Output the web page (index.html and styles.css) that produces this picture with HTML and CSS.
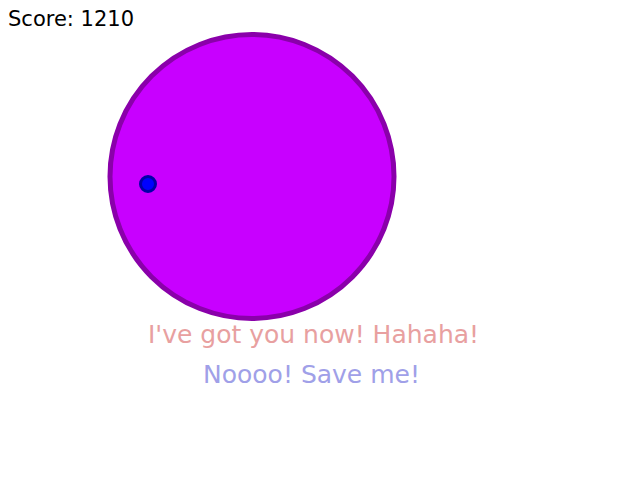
FILE: index.html
```html
<!DOCTYPE html>
<html>
<head>
<meta charset="utf-8">
<link rel="stylesheet" href="styles.css">
</head>
<body>
<div class="stage">
  <svg class="scene" width="640" height="480" viewBox="0 0 640 480">
    <circle class="blob" cx="252" cy="176.5" r="142"/>
    <circle class="prey" cx="148" cy="184" r="7.5"/>
    <text class="taunt" x="313.5" y="343">I've got you now! Hahaha!</text>
    <text class="plea" x="311.5" y="383">Noooo! Save me!</text>
  </svg>
  <div class="score">Score: 1210</div>
</div>
</body>
</html>
```
FILE: styles.css
```css
html, body {
  margin: 0;
  padding: 0;
  background: #ffffff;
}
.stage {
  position: relative;
  width: 640px;
  height: 480px;
  overflow: hidden;
  font-family: "DejaVu Sans", sans-serif;
}
.scene {
  display: block;
}
.score {
  position: absolute;
  left: 8px;
  top: 6px;
  font-size: 21px;
  line-height: 26px;
  color: #000000;
}
.blob {
  fill: #c800ff;
  stroke: #8a00aa;
  stroke-width: 5;
}
.prey {
  fill: #0000ff;
  stroke: #0000a8;
  stroke-width: 3;
}
.taunt {
  font-family: "DejaVu Sans", sans-serif;
  font-size: 25px;
  fill: #e8a0a0;
  text-anchor: middle;
}
.plea {
  font-family: "DejaVu Sans", sans-serif;
  font-size: 25px;
  fill: #a0a0e8;
  text-anchor: middle;
}
```
